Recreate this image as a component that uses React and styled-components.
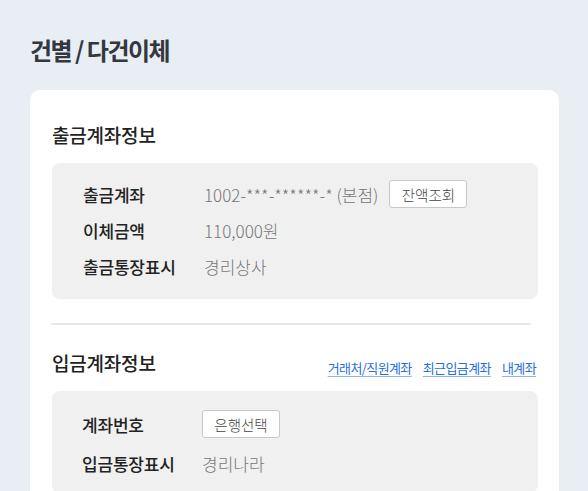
import React from 'react';
import styled, { createGlobalStyle } from 'styled-components';

const GlobalStyle = createGlobalStyle`
  html, body {
    margin: 0;
    padding: 0;
    background: #e9eef5;
    font-family: 'Noto Sans CJK KR', 'Noto Sans', sans-serif;
  }
`;

const Page = styled.div`
  min-height: 491px;
  padding: 30px 29px 0 30px;
  box-sizing: border-box;
  overflow: hidden;
`;

const PageTitle = styled.h1`
  margin: 0 0 20px;
  font-size: 24px;
  line-height: 40px;
  font-weight: 700;
  letter-spacing: -1.5px;
  color: #333840;
`;

const Card = styled.div`
  background: #fff;
  border-radius: 10px 10px 0 0;
  padding: 31px 21px 40px 22px;
`;

const SectionHead = styled.div`
  display: flex;
  align-items: center;
  justify-content: space-between;
  margin-bottom: 14px;
`;

const SectionTitle = styled.h2`
  margin: 0;
  font-size: 19px;
  line-height: 28px;
  font-weight: 500;
  letter-spacing: -0.2px;
  color: #222;
`;

const Links = styled.div`
  display: flex;
  gap: 11px;
  padding: 8px 2px 0 0;
`;

const Link = styled.a`
  font-size: 13px;
  letter-spacing: -0.6px;
  color: #1f6fe0;
  text-decoration: underline;
  text-decoration-color: #8db6f0;
  text-underline-offset: 3px;
  cursor: pointer;
`;

const InfoBox = styled.div`
  background: #f0f0f0;
  border-radius: 8px;
  padding: ${(p) => p.$pad || '13px 0 15px 31px'};
`;

const Row = styled.div`
  display: flex;
  align-items: center;
  height: ${(p) => p.$h || 36}px;
`;

const Label = styled.div`
  width: ${(p) => p.$w || 121}px;
  flex-shrink: 0;
  font-size: 17px;
  font-weight: 500;
  letter-spacing: -0.2px;
  color: #222;
`;

const Value = styled.div`
  font-size: 17px;
  font-weight: 300;
  letter-spacing: 0;
  color: #777;
`;

const SmallButton = styled.button`
  margin-left: ${(p) => p.$ml || 0}px;
  width: 78px;
  height: 28px;
  padding: 0;
  background: #fff;
  border: 1px solid #c8c8c8;
  border-radius: 3px;
  font-family: inherit;
  font-size: 14.5px;
  font-weight: 300;
  letter-spacing: 0;
  color: #444;
  cursor: pointer;
`;

const Divider = styled.hr`
  margin: 24px 7px 24px -1px;
  border: none;
  border-top: 2px solid #e8e8e8;
`;

export default function App() {
  return (
    <>
      <GlobalStyle />
      <Page>
        <PageTitle>건별 / 다건이체</PageTitle>
        <Card>
          <SectionHead>
            <SectionTitle>출금계좌정보</SectionTitle>
          </SectionHead>
          <InfoBox>
            <Row>
              <Label>출금계좌</Label>
              <Value>1002-***-******-* (본점)</Value>
              <SmallButton $ml={11}>잔액조회</SmallButton>
            </Row>
            <Row>
              <Label>이체금액</Label>
              <Value>110,000원</Value>
            </Row>
            <Row>
              <Label>출금통장표시</Label>
              <Value>경리상사</Value>
            </Row>
          </InfoBox>

          <Divider />

          <SectionHead>
            <SectionTitle>입금계좌정보</SectionTitle>
            <Links>
              <Link>거래처/직원계좌</Link>
              <Link>최근입금계좌</Link>
              <Link>내계좌</Link>
            </Links>
          </SectionHead>
          <InfoBox $pad="14px 0 10px 30px">
            <Row $h={38}>
              <Label $w={120}>계좌번호</Label>
              <SmallButton>은행선택</SmallButton>
            </Row>
            <Row $h={40}>
              <Label $w={120}>입금통장표시</Label>
              <Value>경리나라</Value>
            </Row>
          </InfoBox>
        </Card>
      </Page>
    </>
  );
}
